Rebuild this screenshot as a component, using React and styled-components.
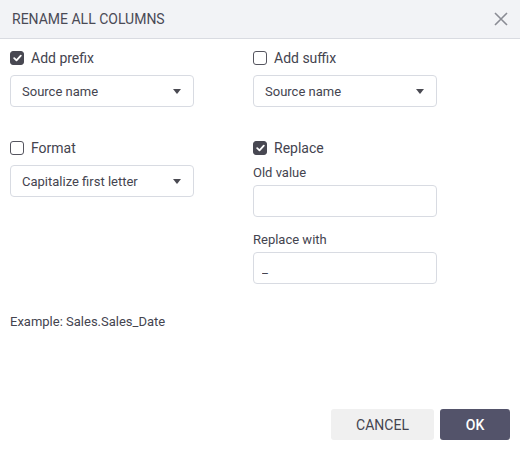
import styled, { createGlobalStyle } from 'styled-components';

const GlobalStyle = createGlobalStyle`
  html, body {
    margin: 0;
    padding: 0;
    background: #fff;
  }
  body {
    font-family: Roboto, "Liberation Sans", sans-serif;
    color: #44444f;
  }
`;

export default function App() {
  return (
    <>
      <GlobalStyle />
      <Dialog>
        <Header>
          <Title>Rename all columns</Title>
          <CloseButton aria-label="Close">
            <svg width="14" height="14" viewBox="0 0 14 14">
              <path d="M1 1 L13 13 M13 1 L1 13" stroke="#8a8c94" strokeWidth="1.6" />
            </svg>
          </CloseButton>
        </Header>

        <Body>
          <Grid>
            <Column>
              <CheckRow checked label="Add prefix" />
              <Select value="Source name" />
            </Column>
            <Column>
              <CheckRow label="Add suffix" />
              <Select value="Source name" />
            </Column>
            <Column>
              <CheckRow label="Format" />
              <Select value="Capitalize first letter" />
            </Column>
            <Column>
              <CheckRow checked label="Replace" />
              <FieldLabel>Old value</FieldLabel>
              <Input />
              <FieldLabel $spaced>Replace with</FieldLabel>
              <Input defaultValue="_" />
            </Column>
          </Grid>
          <Example>Example: Sales.Sales_Date</Example>
        </Body>

        <Footer>
          <Button>Cancel</Button>
          <Button $primary>OK</Button>
        </Footer>
      </Dialog>
    </>
  );
}

function CheckRow({ checked, label }) {
  return (
    <CheckLabel>
      <Box $checked={checked}>
        {checked && (
          <svg width="9" height="8" viewBox="0 0 9 8">
            <path d="M1.2 4.2 L3.5 6.4 L7.8 1.6" stroke="#fff" strokeWidth="1.8" fill="none" strokeLinecap="round" strokeLinejoin="round" />
          </svg>
        )}
      </Box>
      {label}
    </CheckLabel>
  );
}

function Select({ value }) {
  return (
    <SelectBox>
      <span>{value}</span>
      <Caret />
    </SelectBox>
  );
}

const Dialog = styled.div`
  width: 520px;
  height: 451px;
  display: flex;
  flex-direction: column;
  background: #fff;
`;

const Header = styled.div`
  height: 38px;
  display: flex;
  align-items: center;
  justify-content: space-between;
  padding: 0 12px 0 12px;
  background: #f2f3f6;
  border-bottom: 1px solid #d9dbe1;
  box-sizing: content-box;
`;

const Title = styled.h2`
  margin: 0;
  font-size: 14px;
  font-weight: 400;
  text-transform: uppercase;
  color: #4a4a55;
`;

const CloseButton = styled.button`
  border: none;
  background: transparent;
  padding: 0;
  display: flex;
  align-items: center;
  cursor: pointer;
`;

const Body = styled.div`
  flex: 1;
  padding: 9px 10px 0 10px;
`;

const Grid = styled.div`
  display: grid;
  grid-template-columns: 243px 184px;
  row-gap: 31px;
`;

const Column = styled.div`
  display: flex;
  flex-direction: column;
  width: 184px;
`;

const CheckLabel = styled.label`
  display: flex;
  align-items: center;
  gap: 7px;
  height: 20px;
  font-size: 14px;
  color: #44444f;
  margin-bottom: 7px;
`;

const Box = styled.span`
  width: 14px;
  height: 14px;
  box-sizing: border-box;
  border-radius: 3px;
  display: flex;
  align-items: center;
  justify-content: center;
  background: ${p => (p.$checked ? '#484852' : '#fff')};
  border: 1px solid ${p => (p.$checked ? '#484852' : '#55555f')};
`;

const SelectBox = styled.div`
  height: 32px;
  box-sizing: border-box;
  border: 1px solid #d8dbe2;
  border-radius: 4px;
  display: flex;
  align-items: center;
  justify-content: space-between;
  padding: 0 12px 0 11px;
  font-size: 13px;
  color: #44444f;
`;

const Caret = styled.span`
  width: 0;
  height: 0;
  border-left: 4.5px solid transparent;
  border-right: 4.5px solid transparent;
  border-top: 5px solid #4a4a52;
`;

const FieldLabel = styled.div`
  font-size: 13px;
  color: #44444f;
  line-height: 16px;
  margin: ${p => (p.$spaced ? '15px' : '0')} 0 4px 0;
`;

const Input = styled.input`
  height: 32px;
  box-sizing: border-box;
  border: 1px solid #d8dbe2;
  border-radius: 4px;
  padding: 0 8px;
  font-family: inherit;
  font-size: 13px;
  color: #44444f;
  outline: none;
`;

const Example = styled.div`
  margin-top: 30px;
  font-size: 13px;
  color: #44444f;
`;

const Footer = styled.div`
  display: flex;
  justify-content: flex-end;
  gap: 6px;
  padding: 0 10px 11px 0;
`;

const Button = styled.button`
  height: 31px;
  min-width: ${p => (p.$primary ? '70px' : '103px')};
  border: none;
  border-radius: 3px;
  font-family: inherit;
  font-size: 14px;
  font-weight: ${p => (p.$primary ? 500 : 400)};
  text-transform: uppercase;
  background: ${p => (p.$primary ? '#53536a' : '#f0f0f0')};
  color: ${p => (p.$primary ? '#fff' : '#44444f')};
  cursor: pointer;
`;
